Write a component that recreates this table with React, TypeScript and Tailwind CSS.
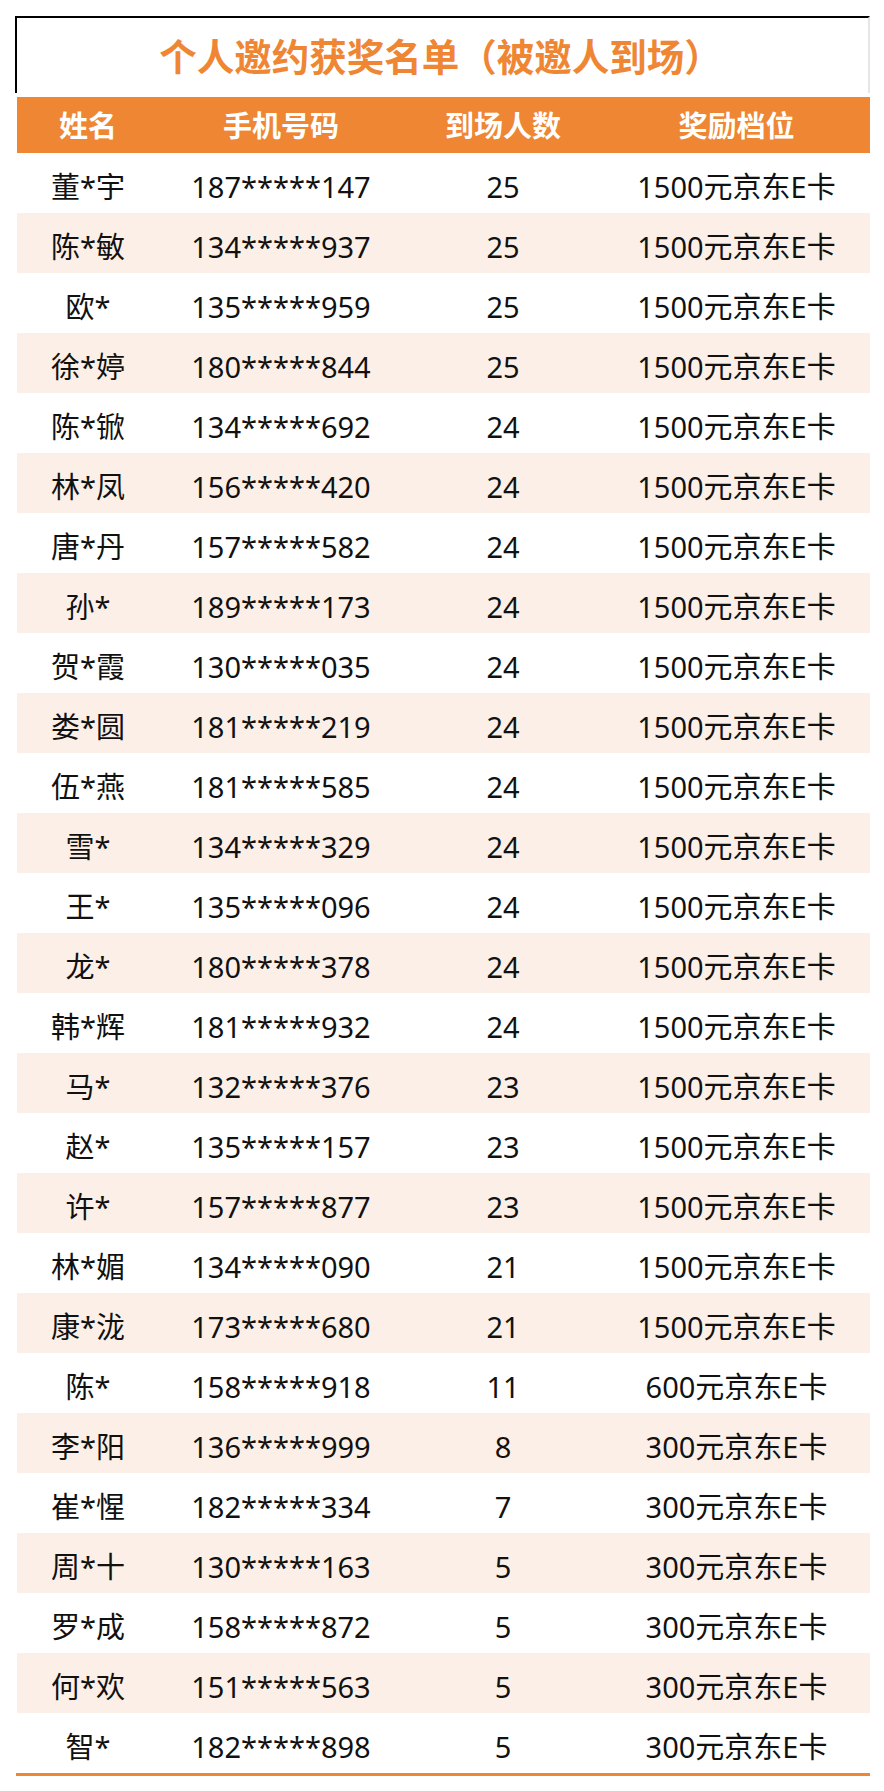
import React from 'react';

type Row = { name: string; phone: string; count: number; prize: string };

const rows: Row[] = [
  { name: '董*宇', phone: '187*****147', count: 25, prize: '1500元京东E卡' },
  { name: '陈*敏', phone: '134*****937', count: 25, prize: '1500元京东E卡' },
  { name: '欧*', phone: '135*****959', count: 25, prize: '1500元京东E卡' },
  { name: '徐*婷', phone: '180*****844', count: 25, prize: '1500元京东E卡' },
  { name: '陈*锨', phone: '134*****692', count: 24, prize: '1500元京东E卡' },
  { name: '林*凤', phone: '156*****420', count: 24, prize: '1500元京东E卡' },
  { name: '唐*丹', phone: '157*****582', count: 24, prize: '1500元京东E卡' },
  { name: '孙*', phone: '189*****173', count: 24, prize: '1500元京东E卡' },
  { name: '贺*霞', phone: '130*****035', count: 24, prize: '1500元京东E卡' },
  { name: '娄*圆', phone: '181*****219', count: 24, prize: '1500元京东E卡' },
  { name: '伍*燕', phone: '181*****585', count: 24, prize: '1500元京东E卡' },
  { name: '雪*', phone: '134*****329', count: 24, prize: '1500元京东E卡' },
  { name: '王*', phone: '135*****096', count: 24, prize: '1500元京东E卡' },
  { name: '龙*', phone: '180*****378', count: 24, prize: '1500元京东E卡' },
  { name: '韩*辉', phone: '181*****932', count: 24, prize: '1500元京东E卡' },
  { name: '马*', phone: '132*****376', count: 23, prize: '1500元京东E卡' },
  { name: '赵*', phone: '135*****157', count: 23, prize: '1500元京东E卡' },
  { name: '许*', phone: '157*****877', count: 23, prize: '1500元京东E卡' },
  { name: '林*媚', phone: '134*****090', count: 21, prize: '1500元京东E卡' },
  { name: '康*泷', phone: '173*****680', count: 21, prize: '1500元京东E卡' },
  { name: '陈*', phone: '158*****918', count: 11, prize: '600元京东E卡' },
  { name: '李*阳', phone: '136*****999', count: 8, prize: '300元京东E卡' },
  { name: '崔*惺', phone: '182*****334', count: 7, prize: '300元京东E卡' },
  { name: '周*十', phone: '130*****163', count: 5, prize: '300元京东E卡' },
  { name: '罗*成', phone: '158*****872', count: 5, prize: '300元京东E卡' },
  { name: '何*欢', phone: '151*****563', count: 5, prize: '300元京东E卡' },
  { name: '智*', phone: '182*****898', count: 5, prize: '300元京东E卡' },
];

const headers = ['姓名', '手机号码', '到场人数', '奖励档位'];

// column widths, table is 853px wide
const cols = ['w-[142px]', 'w-[244px]', 'w-[200px]', 'w-[267px]'];

export default function App() {
  return (
    <div
      className="w-[884px] min-h-[1791px] bg-white pl-[15px] pt-[16px]"
      style={{ fontFamily: '"Noto Sans", "Noto Sans CJK SC", sans-serif' }}
    >
      {/* title box */}
      <div className="w-[855px] h-[77px] border-t-2 border-l-2 border-black border-r-2 border-r-[#e6e6e6] flex items-center justify-center">
        <h1 className="text-[37.5px] font-bold text-[#ee8634] leading-none pt-[2px] pr-[4px]">
          个人邀约获奖名单（被邀人到场）
        </h1>
      </div>

      <div className="w-[853px] ml-[2px] mt-[4px]">
        {/* header */}
        <div className="flex h-[56px] bg-[#ee8634] text-white">
          {headers.map((h, i) => (
            <div key={h} className={`${cols[i]} flex items-center justify-center text-[29px] font-bold leading-none`}>
              {h}
            </div>
          ))}
        </div>

        {/* body */}
        {rows.map((r, idx) => (
          <div
            key={r.phone}
            className={`flex h-[60px] text-[29px] leading-none text-[#111] ${idx % 2 === 1 ? 'bg-[#fcefe7]' : 'bg-white'}`}
          >
            <div className={`${cols[0]} flex items-center justify-center pt-[6px]`}>{r.name}</div>
            <div className={`${cols[1]} flex items-center justify-center pt-[6px]`}>{r.phone}</div>
            <div className={`${cols[2]} flex items-center justify-center pt-[6px]`}>{r.count}</div>
            <div className={`${cols[3]} flex items-center justify-center pt-[6px]`}>{r.prize}</div>
          </div>
        ))}

        {/* bottom rule */}
        <div className="h-[3px] bg-[#ee8634] -ml-[1px]" />
      </div>
    </div>
  );
}
